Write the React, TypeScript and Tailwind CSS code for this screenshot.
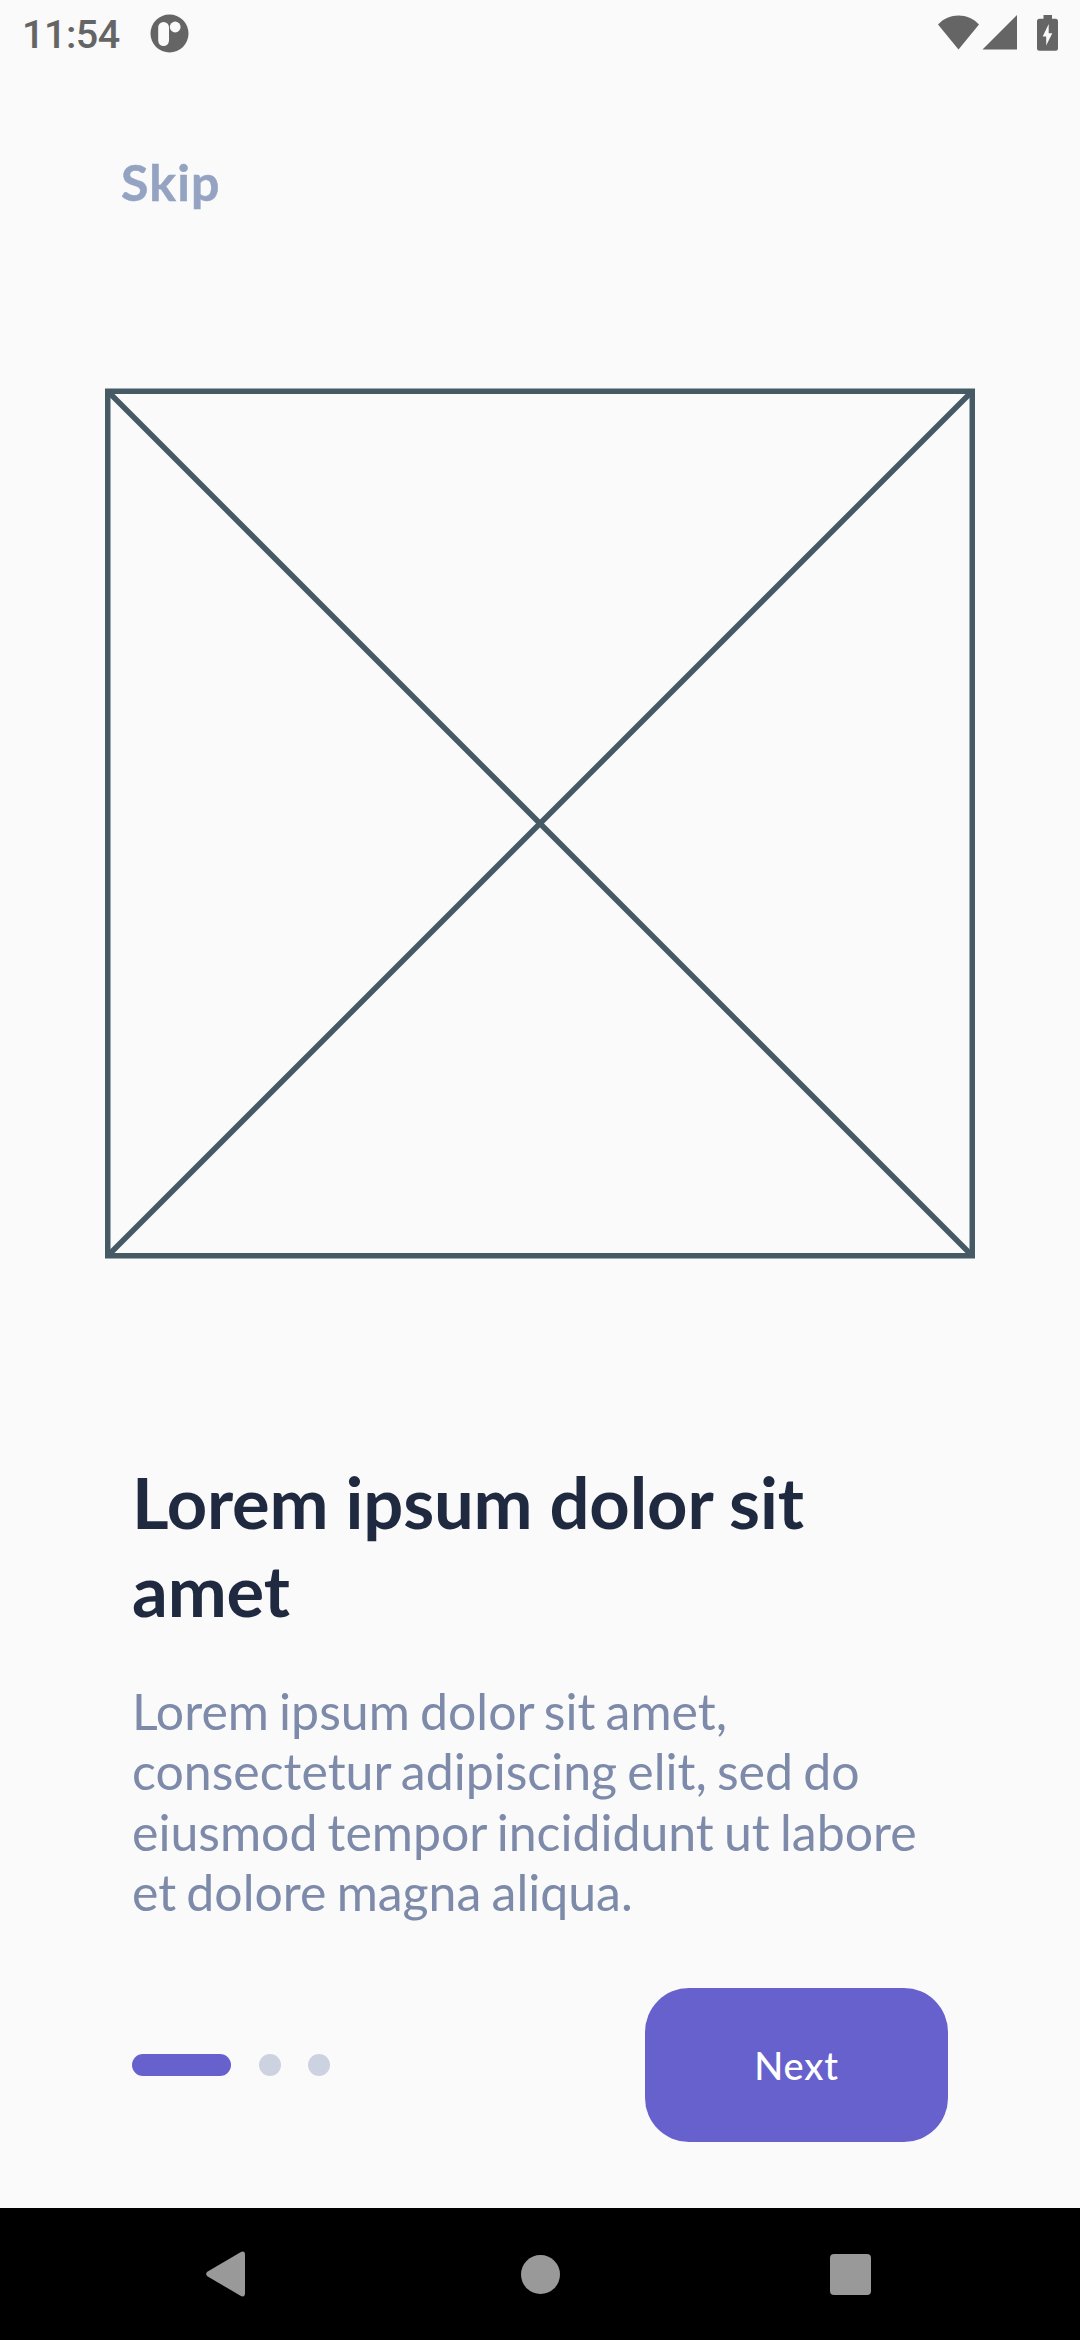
function StatusBar() {
  return (
    <header className="flex h-[66px] shrink-0 items-center justify-between pr-[22px] pl-[22px] text-[#656565]">
      <div className="flex items-center">
        <span className="w-[128px] pt-[3px] font-['Roboto',sans-serif] text-[39.5px] leading-[46px] font-medium tracking-[-0.5px] whitespace-nowrap">
          11:54
        </span>
        <svg className="size-[39px]" viewBox="0 0 39 39">
          <circle cx="19.5" cy="19.5" r="19" fill="currentColor" />
          <rect x="8.2" y="8" width="10.8" height="24" rx="5.4" fill="#fafafa" />
          <circle cx="25.2" cy="13" r="5.4" fill="#fafafa" />
        </svg>
      </div>
      <svg className="h-[66px] w-[121px]" viewBox="937 0 121 66" fill="currentColor">
        <path d="M958.5 49.5L938 24.5C949 12.500 968 12.500 979 24.500Z" />
        <path d="M982.500 49.500L1017 15V49.500Z" />
        <path
          fillRule="evenodd"
          d="M1043.500 15H1052V18.700H1055.500Q1058 18.700 1058 21.200V48.300Q1058 50.800 1055.500 50.800H1039.500Q1037 50.800 1037 48.300V21.200Q1037 18.700 1039.500 18.700H1043.500ZM1048.700 24L1042.700 36.500H1046.200V45.500L1052.300 33.200H1048.700Z"
        />
      </svg>
    </header>
  );
}

function PlaceholderImage() {
  return (
    <svg
      className="mx-auto mt-[148px] h-[871px] w-[870px] shrink-0"
      viewBox="0 0 870 871"
      fill="none"
      stroke="#455a64"
      strokeWidth="5.5"
    >
      <rect x="2.75" y="3.25" width="864.500" height="864.500" />
      <path d="M2.750 3.250L867.250 867.750M867.250 3.250L2.750 867.750" />
    </svg>
  );
}

function NavigationBar() {
  return (
    <nav className="flex h-[132px] shrink-0 items-center justify-between bg-black pr-[209px] pl-[206px]">
      <svg className="h-[46px] w-[39px]" viewBox="0 0 39 46" fill="#999999">
        <path d="M1.300 20.800L34.500 1.200Q39 -1 39 4V42Q39 47 34.500 44.800L1.300 25.200Q-1 23 1.300 20.800Z" />
      </svg>
      <span className="ml-[5px] size-[39px] rounded-full bg-[#999999]" />
      <span className="size-[41px] rounded-[4px] bg-[#999999]" />
    </nav>
  );
}

export default function App() {
  return (
    <div className="flex h-[2340px] w-[1080px] flex-col overflow-hidden bg-[#fafafa]">
      <StatusBar />
      <main className="flex flex-1 flex-col">
        <button className="mt-[81px] ml-[121px] h-[93px] self-start pb-[23px] text-left font-['Lato',sans-serif] text-[50px] leading-[66px] font-bold tracking-[1.2px] text-[#94a3c1] [-webkit-text-stroke:0.5px_#94a3c1]">
          Skip
        </button>
        <PlaceholderImage />
        <section className="mt-[199px] pr-[132px] pl-[132px]">
          <h1 className="font-['Lato',sans-serif] text-[70.5px] leading-[88px] font-bold tracking-[-0.15px] text-[#1f2a40]">
            Lorem ipsum dolor sit
            <br />
            amet
          </h1>
          <p className="mt-[47px] font-['Lato',sans-serif] text-[50px] leading-[60.33px] whitespace-nowrap text-[#7d8aaa] [word-spacing:-2.6px]">
            Lorem ipsum dolor sit amet,
            <br />
            consectetur adipiscing elit, sed do
            <br />
            eiusmod tempor incididunt ut labore
            <br />
            et dolore magna aliqua.
          </p>
        </section>
        <div className="mt-auto mb-[66px] flex items-center justify-between pr-[132px] pl-[132px]">
          <div className="flex items-center gap-[27.5px]">
            <span className="h-[22px] w-[99px] rounded-full bg-[#6761ce]" />
            <span className="size-[22px] rounded-full bg-[#ccd2df]" />
            <span className="size-[22px] rounded-full bg-[#ccd2df]" />
          </div>
          <button className="h-[154px] w-[303px] rounded-[44px] bg-[#6761ce] font-['Lato',sans-serif] text-[38px] font-medium tracking-[0.8px] text-white">
            Next
          </button>
        </div>
      </main>
      <NavigationBar />
    </div>
  );
}
